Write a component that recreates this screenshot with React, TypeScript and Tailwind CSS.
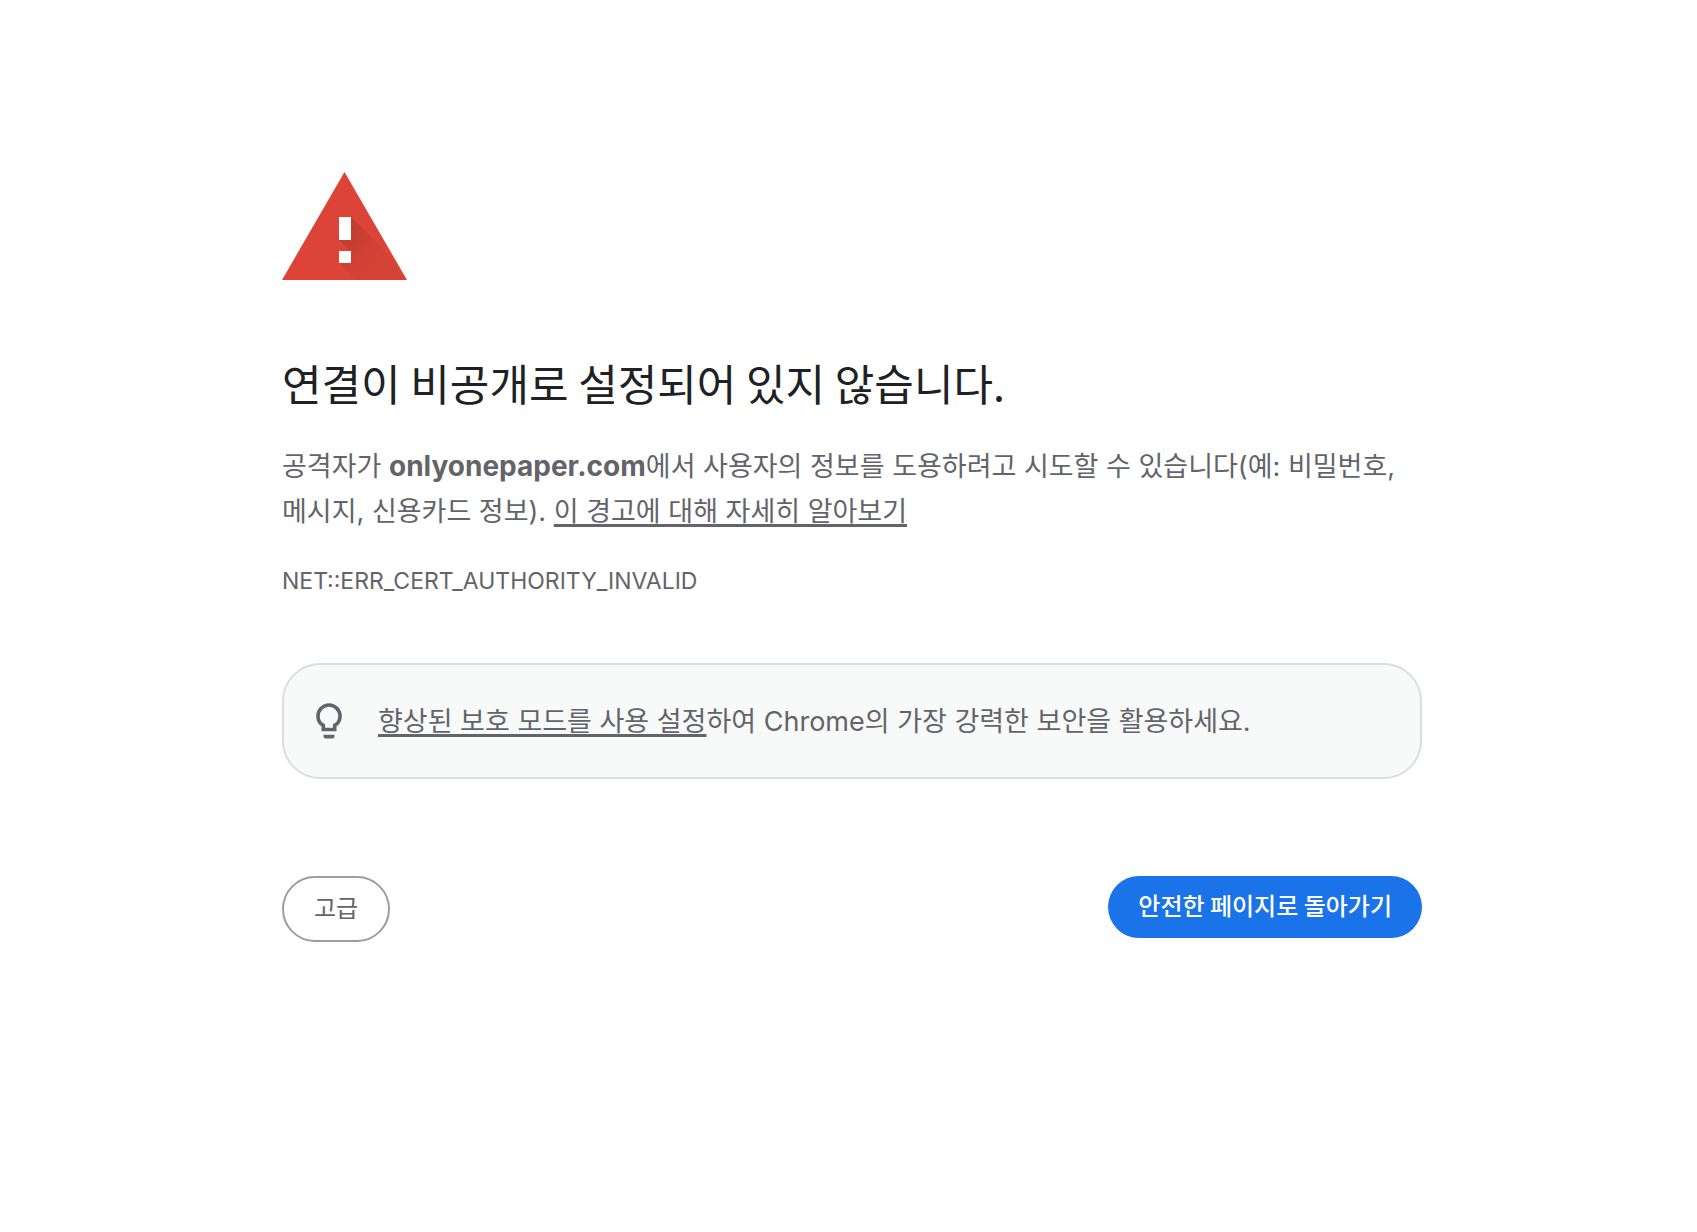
function WarningIcon() {
  return (
    <svg viewBox="0 0 125 108" className="h-[108px] w-[125px]" role="img" aria-label="경고">
      <defs>
        <linearGradient id="shade" gradientUnits="userSpaceOnUse" x1="60" y1="62" x2="94" y2="96">
          <stop offset="0" stopColor="#000" stopOpacity="0.12" />
          <stop offset="0.35" stopColor="#000" stopOpacity="0.08" />
          <stop offset="0.6" stopColor="#000" stopOpacity="0.045" />
          <stop offset="1" stopColor="#000" stopOpacity="0.035" />
        </linearGradient>
      </defs>
      <path d="M62.500 0 125 108H0Z" fill="#db4437" />
      <path d="M69 45 109 85 122.500 108H74L57 91H69V80L57 68Z" fill="url(#shade)" />
      <path d="M57 45h12v23H57zM57 79h12v12H57z" fill="#fff" />
    </svg>
  );
}

function BulbIcon() {
  return (
    <svg viewBox="0 0 26 37" className="h-[37px] w-[26px] shrink-0" fill="none" aria-hidden="true">
      <path
        d="M7.300 26.500v-4.200C4 20.500 2 17.200 2 13.200 2 7 6.900 2 13 2s11 5 11 11.200c0 4-2 7.300-5.300 9.100v4.200z"
        stroke="#636469"
        strokeWidth="3.600"
      />
      <path d="M7.500 31.800h11v1.500a2.200 2.200 0 0 1-2.200 2.200H9.700a2.200 2.200 0 0 1-2.200-2.200z" fill="#636469" />
    </svg>
  );
}

const linkClass = 'underline decoration-[3px] underline-offset-[3px] [text-decoration-skip-ink:none]';

export default function App() {
  return (
    <main className="min-h-screen bg-white pt-[172px] pr-4 pb-16 pl-[23px] font-['Inter','Noto_Sans_CJK_KR',sans-serif] text-[#636469]">
      <div className="mx-auto w-full max-w-[1140px]">
        <WarningIcon />
        <h1 className="mt-[70px] font-['Noto_Sans_CJK_KR',sans-serif] text-[43px] leading-[64px] font-normal text-[#202124]">
          연결이 비공개로 설정되어 있지 않습니다.
        </h1>
        <p className="mt-[30px] text-[27px] leading-[45px] break-keep">
          공격자가 <strong className="text-[28px] font-bold">onlyonepaper.com</strong>에서 사용자의 정보를 도용하려고
          시도할 수 있습니다(예: 비밀번호, 메시지, 신용카드 정보).{' '}
          <a href="#learn-more" className={linkClass}>
            이 경고에 대해 자세히 알아보기
          </a>
        </p>
        <p className="mt-[29px] text-[23px] leading-[36px]">NET::ERR_CERT_AUTHORITY_INVALID</p>
        <div className="mt-16 flex items-center gap-9 rounded-[38px] border-2 border-[#dcdddd] bg-[#f8faf9] px-8 pt-[34px] pb-[33px]">
          <BulbIcon />
          <p className="text-[27px] leading-[45px]">
            <a href="#enhanced-protection" className={linkClass}>
              향상된 보호 모드를 사용 설정
            </a>
            하여 Chrome의 가장 강력한 보안을 활용하세요.
          </p>
        </div>
        <div className="mt-[97px] flex items-start justify-between gap-6 font-['Noto_Sans_CJK_KR',sans-serif] text-[24px]">
          <button type="button" className="h-[66px] rounded-full border-2 border-[#9c9da1] px-[30px] pb-[4px]">
            고급
          </button>
          <button type="button" className="h-[62px] rounded-full bg-[#1a73e8] px-[30px] pb-[4px] font-medium text-white">
            안전한 페이지로 돌아가기
          </button>
        </div>
      </div>
    </main>
  );
}
